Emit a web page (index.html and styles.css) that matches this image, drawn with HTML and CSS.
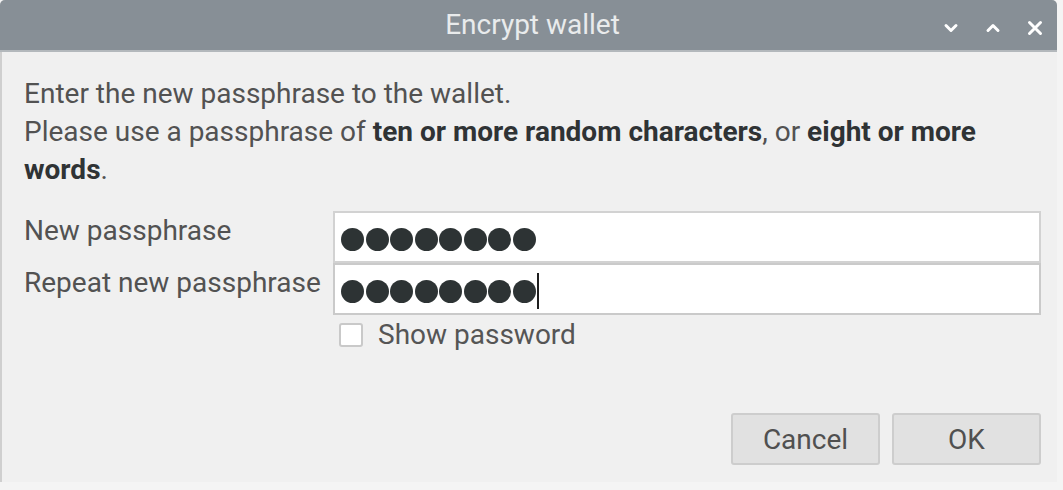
FILE: index.html
```html
<!DOCTYPE html>
<html>
<head>
<meta charset="utf-8">
<title>Encrypt wallet</title>
<link rel="stylesheet" href="styles.css">
</head>
<body>
<div class="screen">
  <div class="window">
    <div class="titlebar">
      <div class="title">Encrypt wallet</div>
      <div class="controls">
        <svg class="ctl" width="16" height="16" viewBox="0 0 16 16"><path d="M3 5.5 L8 10.5 L13 5.5" fill="none" stroke="#fff" stroke-width="3" stroke-linecap="round" stroke-linejoin="round"/></svg>
        <svg class="ctl" width="16" height="16" viewBox="0 0 16 16"><path d="M3 10.5 L8 5.5 L13 10.5" fill="none" stroke="#fff" stroke-width="3" stroke-linecap="round" stroke-linejoin="round"/></svg>
        <svg class="ctl" width="16" height="16" viewBox="0 0 16 16"><path d="M2.5 2.5 L13.5 13.5 M13.5 2.5 L2.5 13.5" fill="none" stroke="#fff" stroke-width="3" stroke-linecap="round"/></svg>
      </div>
    </div>
    <div class="content">
      <div class="intro">
        <div class="line">Enter the new passphrase to the wallet.</div>
        <div class="line">Please use a passphrase of <b>ten or more random characters</b>, or <b>eight or more</b></div>
        <div class="line"><b>words</b>.</div>
      </div>
      <div class="form">
        <div class="label">New passphrase</div>
        <div class="field"><span class="dots"><i></i><i></i><i></i><i></i><i></i><i></i><i></i><i></i></span></div>
        <div class="label">Repeat new passphrase</div>
        <div class="field focused"><span class="dots"><i></i><i></i><i></i><i></i><i></i><i></i><i></i><i></i></span><span class="caret"></span></div>
        <div></div>
        <label class="check"><span class="box"></span><span>Show password</span></label>
      </div>
      <div class="buttons">
        <div class="btn">Cancel</div>
        <div class="btn">OK</div>
      </div>
    </div>
  </div>
</div>
</body>
</html>
```
FILE: styles.css
```css
html, body {
  margin: 0;
  padding: 0;
  background: #f4f4f4;
}
body {
  font-family: Roboto, "Liberation Sans", sans-serif;
  width: 1063px;
  height: 490px;
  overflow: hidden;
}
.screen {
  display: flex;
  width: 1063px;
  height: 490px;
}
.window {
  width: 1057px;
  height: 482px;
  display: flex;
  flex-direction: column;
  background: #f0f0f0;
  border-left: 2px solid #cfcfcf;
  border-radius: 5px 5px 0 0;
  box-sizing: border-box;
}
.titlebar {
  height: 52px;
  flex: none;
  background: #878f96;
  border-bottom: 2px solid #b3b8bc;
  border-radius: 5px 5px 0 0;
  box-sizing: border-box;
  display: flex;
  align-items: center;
  justify-content: center;
  position: relative;
  margin-left: -2px;
}
.title {
  color: #e9ebec;
  font-size: 28px;
  padding-left: 8px;
  padding-bottom: 2px;
}
.controls {
  position: absolute;
  right: 14px;
  top: 20px;
  display: flex;
  gap: 26px;
}
.ctl {
  display: block;
}
.content {
  flex: 1;
  display: flex;
  flex-direction: column;
  padding: 23px 16px 17px 22px;
}
.intro {
  font-size: 28px;
  line-height: 38px;
  color: #525252;
}
.line {
  white-space: nowrap;
}
.intro b {
  color: #2f3335;
  font-weight: 700;
}
.form {
  margin-top: 22px;
  display: grid;
  grid-template-columns: 309px 1fr;
  grid-auto-rows: auto;
}
.label {
  font-size: 28px;
  color: #525252;
  padding-top: 3px;
  white-space: nowrap;
}
.field {
  height: 52px;
  box-sizing: border-box;
  background: #fff;
  border: 2px solid #d2d2d2;
  display: flex;
  align-items: center;
  padding-left: 6px;
  padding-top: 4px;
}
.field.focused {
  border-color: #cacaca;
}
.dots {
  display: flex;
  gap: 1.5px;
}
.dots i {
  width: 23px;
  height: 23px;
  border-radius: 50%;
  background: #2d3334;
  display: block;
}
.caret {
  width: 2px;
  height: 36px;
  background: #1f1f1f;
  margin-left: 1px;
}
.check {
  margin-top: 3px;
  display: flex;
  align-items: center;
  gap: 15px;
  padding-left: 6px;
  font-size: 28px;
  color: #555;
}
.box {
  width: 24px;
  height: 24px;
  box-sizing: border-box;
  background: #fff;
  border: 2px solid #c9c9c9;
  border-radius: 3px;
}
.buttons {
  margin-top: auto;
  display: flex;
  justify-content: flex-end;
  gap: 12px;
}
.btn {
  width: 149px;
  height: 52px;
  box-sizing: border-box;
  background: #e1e1e1;
  border: 2px solid #cdcdcd;
  border-radius: 3px;
  display: flex;
  align-items: center;
  justify-content: center;
  font-size: 28px;
  color: #505050;
}
```
